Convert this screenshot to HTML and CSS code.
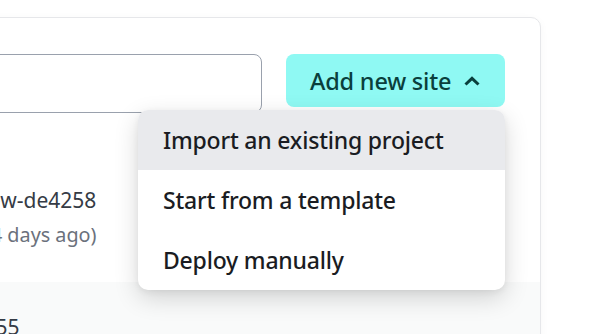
FILE: index.html
```html
<!DOCTYPE html>
<html lang="en">
<head>
    <meta charset="UTF-8">
    <meta name="viewport" content="width=device-width, initial-scale=1.0">
    <title>Sites</title>
    <link rel="stylesheet" href="styles.css">
</head>
<body>

<div class="page">
    <!-- site list card -->
    <section class="sites-card">
        <div class="toolbar">
            <input type="text" class="search" aria-label="Search sites">
            <div class="add-site">
                <button class="btn-add">
                    Add new site
                    <svg class="chevron" width="16" height="10" viewBox="0 0 16 10" aria-hidden="true">
                        <path d="M1.5 8.5 L8 2.3 L14.5 8.5" fill="none" stroke="currentColor" stroke-width="3"/>
                    </svg>
                </button>
                <ul class="menu">
                    <li class="menu-item active">Import an existing project</li>
                    <li class="menu-item">Start from a template</li>
                    <li class="menu-item">Deploy manually</li>
                </ul>
            </div>
        </div>

        <ul class="site-list">
            <li class="site-row">
                <div class="site-name">marvelous-cupcake-preview-de4258</div>
                <div class="site-meta">Last published at 2:41 PM (4 days ago)</div>
            </li>
            <li class="site-row alt">
                <div class="site-name">fantastic-gumdrop-cf9a1c55</div>
            </li>
        </ul>
    </section>
</div>

</body>
</html>
```

FILE: styles.css
```css
body {
    margin: 0;
    padding: 0;
    background-color: #ffffff;
    font-family: "Noto Sans", "Open Sans", Arial, sans-serif;
    color: #1f2328;
    overflow: hidden;
}
.page {
    padding-top: 17px;
}
.sites-card {
    box-sizing: border-box;
    margin-left: -300px;
    width: 841px;
    background-color: #ffffff;
    border: 1px solid #e6e7ea;
    border-radius: 10px;
    box-shadow: 0 2px 8px rgba(0, 0, 0, 0.04);
}
.toolbar {
    display: flex;
    align-items: flex-start;
    gap: 24px;
    padding: 36px 35px 0 0;
}
.search {
    flex: 1;
    height: 59px;
    box-sizing: border-box;
    border: 1px solid #9aa1ad;
    border-radius: 8px;
    background: #ffffff;
}
.add-site {
    position: relative;
}
.btn-add {
    display: flex;
    align-items: center;
    gap: 13px;
    width: 219px;
    height: 53px;
    padding: 0 0 0 24px;
    border: none;
    border-radius: 8px;
    background-color: #8ff9f3;
    color: #0a3f3c;
    font-family: inherit;
    font-size: 23.5px;
    font-weight: 500;
    letter-spacing: -0.2px;
    cursor: pointer;
}
.chevron {
    margin-top: 1px;
}
.menu {
    position: absolute;
    top: 56px;
    right: 0;
    width: 367px;
    margin: 0;
    padding: 0;
    list-style: none;
    background-color: #ffffff;
    border-radius: 10px;
    overflow: hidden;
    box-shadow: 0 8px 24px rgba(0, 0, 0, 0.16), 0 2px 6px rgba(0, 0, 0, 0.06);
    z-index: 2;
}
.menu-item {
    height: 60px;
    line-height: 60px;
    padding-left: 25px;
    font-size: 23px;
    font-weight: 500;
    letter-spacing: -0.2px;
    color: #1a1c22;
}
.menu-item.active {
    background-color: #e9eaed;
}
.site-list {
    margin: 0;
    padding: 0;
    list-style: none;
}
.site-row {
    padding: 72px 0 34px 41px;
}
.site-row.alt {
    padding-top: 30px;
    background-color: #f9fafa;
}
.site-name {
    font-size: 21px;
    line-height: 30px;
    color: #353b45;
}
.site-meta {
    margin-top: 7px;
    font-size: 19.8px;
    line-height: 26px;
    color: #6b717c;
}
```
